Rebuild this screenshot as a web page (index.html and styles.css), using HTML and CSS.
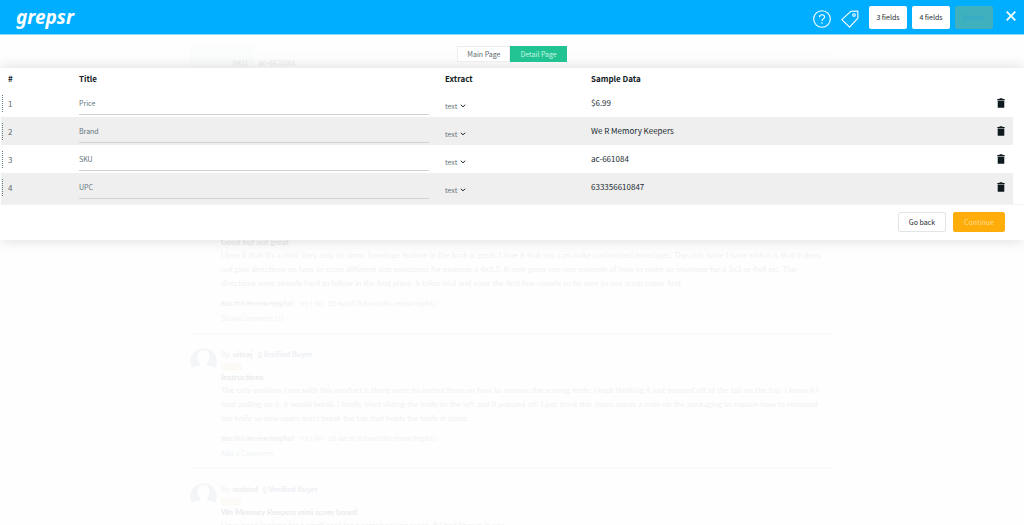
FILE: index.html
```html
<!DOCTYPE html>
<html lang="en">
<head>
<meta charset="utf-8">
<title>Grepsr</title>
<link rel="stylesheet" href="styles.css">
</head>
<body>
<svg class="sprite" aria-hidden="true">
  <symbol id="trash" viewBox="0 0 8 10"><path d="M0.300 1h2L2.800.2h2.400l.5.8h2v1.300H.3zM.7 2.700h6.600v6.200a.9.9 0 0 1-.9.9H1.600a.9.9 0 0 1-.9-.9z"/></symbol>
  <symbol id="chevron" viewBox="0 0 6 4"><path d="M.8.800l2.200 2 2.200-2" fill="none" stroke="currentColor" stroke-width="1"/></symbol>
  <symbol id="avatar" viewBox="0 0 27 22"><path d="M2 20A13.200 13.200 0 1 1 25 20Q24 18.500 18 17.500Q16.500 17 17 15Q20 12 19.500 7Q18.500 2 13.500 2Q8.500 2 7.500 7Q7 12 10 15Q10.500 17 9 17.500Q3 18.500 2 20z"/></symbol>
</svg>

<main class="site">
  <section class="specs">
    <div class="swatch"></div>
    <div class="spec-list">
      <div class="spec-line"></div>
      <p class="spec"><span>SKU</span><span>ac-661084</span></p>
    </div>
  </section>

  <article class="review">
    <svg class="avatar"><use href="#avatar"/></svg>
    <div class="review-body">
      <p class="by">By: <b>scrapper</b> <b class="verified">▯ Verified Buyer</b></p>
      <p class="stars">▯▯▯▯▯</p>
      <h3>Good but not great</h3>
      <p class="copy">I love it that it's a mini. Very easy to store. Envelope feature in the back is great. I love it that you can make customized envelopes. The only issue I have with it is that it does<br>not give directions on how to score different size envelopes for example a 4x5.5. It only gives you one example of how to make an envelope for a 3x3 or 4x4 etc. The<br>directions were already hard to follow in the first place. It takes trial and error the first few rounds so be sure to use scrap paper first.</p>
      <p class="helpful"><b>Was this Review Helpful?</b><a href="#">Yes</a> | <a href="#">No</a><span>(25 out of 25 found this review helpful.)</span></p>
      <p class="comment"><a href="#">Show Comment (1)</a></p>
    </div>
  </article>

  <article class="review">
    <svg class="avatar"><use href="#avatar"/></svg>
    <div class="review-body">
      <p class="by">By: <b>uiteaj</b> <b class="verified">▯ Verified Buyer</b></p>
      <p class="stars">▯▯▯▯▯</p>
      <h3>Instructions</h3>
      <p class="copy">The only problem I see with this product is there were no instructions on how to remove the scoring knife. I kept thinking it just popped off of the tab on the top. I knew if I<br>kept pulling on it, it would break. I finally tried sliding the knife to the left and it popped off. I just think this items needs a note on the packaging to explain how to removed<br>the knife so new users don't break the tab that holds the knife in place.</p>
      <p class="helpful"><b>Was this Review Helpful?</b><a href="#">Yes</a> | <a href="#">No</a><span>(16 out of 16 found this review helpful.)</span></p>
      <p class="comment"><a href="#">Add a Comment</a></p>
    </div>
  </article>

  <article class="review">
    <svg class="avatar"><use href="#avatar"/></svg>
    <div class="review-body">
      <p class="by">By: <b>mobird</b> <b class="verified">▯ Verified Buyer</b></p>
      <p class="stars">▯▯▯▯▯</p>
      <h3>We Memory Keepers mini score board</h3>
      <p class="copy">Have been looking for a small card for a scrapbooking score. If I had known it was</p>
    </div>
  </article>
</main>

<div class="overlay">
  <header class="topbar">
    <a class="logo" href="#">grepsr</a>
    <div class="tools">
      <button class="icon-btn" aria-label="Help">
        <svg width="18" height="18" viewBox="0 0 18 18" fill="none" stroke="#fff" stroke-width="1.100"><circle cx="9" cy="9" r="8.300"/><path d="M6.500 7.200C6.500 3.900 11.500 4 11.500 7c0 1.900-2.500 1.900-2.500 4M9 12.300v1.400"/></svg>
      </button>
      <button class="icon-btn" aria-label="Tags">
        <svg width="18" height="18" viewBox="0 0 18 18" fill="none" stroke="#fff" stroke-width="1.100" stroke-linejoin="round"><path d="M9.800 1.300L16.800 1.100 16.900 8.200 8.600 17.200.8 9.700z"/><circle cx="13" cy="5" r="1.300"/></svg>
      </button>
      <button class="btn">3 fields</button>
      <button class="btn">4 fields</button>
      <button class="btn export" disabled>Export</button>
      <button class="icon-btn close" aria-label="Close">
        <svg width="10" height="10" viewBox="0 0 10 10" fill="none" stroke="#fff" stroke-width="1.700"><path d="M.7.7l8.600 8.600M9.300.7L.7 9.300"/></svg>
      </button>
    </div>
  </header>

  <nav class="tabs">
    <button class="tab">Main Page</button>
    <button class="tab active">Detail Page</button>
  </nav>

  <section class="panel">
    <table class="fields">
      <colgroup><col class="c-num"><col class="c-title"><col class="c-extract"><col><col class="c-del"></colgroup>
      <thead>
        <tr><th>#</th><th>Title</th><th>Extract</th><th>Sample Data</th><th></th></tr>
      </thead>
      <tbody>
        <tr>
          <td class="num"><span>1</span></td>
          <td><input class="name" aria-label="Title 1" value="Price"></td>
          <td><label class="pick"><select aria-label="Extract 1"><option>text</option></select><svg><use href="#chevron"/></svg></label></td>
          <td>$6.99</td>
          <td><button class="del" aria-label="Delete 1"><svg><use href="#trash"/></svg></button></td>
        </tr>
        <tr>
          <td class="num"><span>2</span></td>
          <td><input class="name" aria-label="Title 2" value="Brand"></td>
          <td><label class="pick"><select aria-label="Extract 2"><option>text</option></select><svg><use href="#chevron"/></svg></label></td>
          <td>We R Memory Keepers</td>
          <td><button class="del" aria-label="Delete 2"><svg><use href="#trash"/></svg></button></td>
        </tr>
        <tr>
          <td class="num"><span>3</span></td>
          <td><input class="name" aria-label="Title 3" value="SKU"></td>
          <td><label class="pick"><select aria-label="Extract 3"><option>text</option></select><svg><use href="#chevron"/></svg></label></td>
          <td>ac-661084</td>
          <td><button class="del" aria-label="Delete 3"><svg><use href="#trash"/></svg></button></td>
        </tr>
        <tr>
          <td class="num"><span>4</span></td>
          <td><input class="name" aria-label="Title 4" value="UPC"></td>
          <td><label class="pick"><select aria-label="Extract 4"><option>text</option></select><svg><use href="#chevron"/></svg></label></td>
          <td>633356610847</td>
          <td><button class="del" aria-label="Delete 4"><svg><use href="#trash"/></svg></button></td>
        </tr>
      </tbody>
    </table>
    <footer class="actions">
      <button class="action">Go back</button>
      <button class="action primary">Continue</button>
    </footer>
  </section>
</div>
</body>
</html>
```

FILE: styles.css
```css
* { box-sizing: border-box; }

body {
  margin: 0;
  background: #fefefe;
  color: #1c2b30;
  font-family: "Noto Sans CJK SC", "Open Sans", sans-serif;
  font-size: 8px;
  line-height: 14px;
}

button, input, select { font: inherit; color: inherit; margin: 0; }
button { padding: 0; border: 0; background: none; }
p, h3 { margin: 0; }
a { text-decoration: none; }
.sprite { display: none; }

/* Faded site behind the overlay */
.site {
  height: 100vh;
  overflow: hidden;
  padding: 44px 190px 0;
  color: #f1f1f1;
}
.specs { display: flex; height: 154px; }
.swatch { width: 64px; background: #fafdfc; }
.spec-list { flex: 1; padding-top: 8px; }
.spec-line { border-top: 1px solid #fafafa; }
.spec { display: flex; gap: 10px; margin-left: -22px; padding-top: 3px; color: #ececec; }

.review {
  display: flex;
  gap: 4px;
  padding: 14px 0 9px;
  border-top: 1px solid #f9f9f9;
}
.avatar { flex: none; width: 27px; height: 22px; fill: #f3f5f7; }
.review-body { flex: 1; }
.by { font-size: 7px; line-height: 12px; }
.by b { color: #eee; }
.by .verified { margin-left: 4px; color: #edf0f4; }
.stars { font-size: 8px; line-height: 11px; color: #fbf4e6; }
.review h3 { font: bold 8px/12px Lato, sans-serif; color: #ebebeb; }
.copy { font-family: Lato, sans-serif; white-space: nowrap; }
.helpful { margin-top: 8px; font-size: 6px; line-height: 12px; }
.helpful b { margin-right: 4px; }
.helpful a { margin: 0 1px; color: #f1f4f6; }
.helpful span { margin-left: 4px; }
.comment { margin-top: 2px; font-size: 7px; line-height: 12px; }
.comment a { color: #eff4f8; }

/* Overlay */
.overlay { position: absolute; top: 0; left: 0; right: 0; }

.topbar {
  display: flex;
  align-items: center;
  justify-content: space-between;
  height: 35px;
  padding: 0 8px 0 16px;
  background: #00aeff;
  border-bottom: 1px solid #8edaff;
}
.logo {
  color: #fff;
  font: italic bold 19px/32px "Noto Sans", sans-serif;
}
.tools { display: flex; align-items: center; gap: 5px; }
.icon-btn { display: flex; margin: 4px 5px 0 0; }
.btn {
  min-width: 38px;
  height: 23px;
  padding: 0 7px;
  border-radius: 2px;
  background: #fff;
  font-size: 7px;
}
.export { background: #3fb0bd; color: #2fa9cc; }
.close { margin: 0 0 2px 8px; }

.tabs { display: flex; justify-content: center; padding: 11px 0 6px; }
.tab {
  height: 16px;
  padding: 0 9px;
  border: 1px solid #ededed;
  background: #fff;
  color: #5c6a70;
  font-size: 7px;
  line-height: 14px;
}
.tab.active { border-color: #20c391; background: #20c391; color: #c9f5e5; }

.panel {
  background: #fff;
  box-shadow: 0 0 14px rgba(0, 0, 0, 0.14);
}
.fields {
  width: calc(100% - 12px);
  margin-left: 1px;
  border-collapse: collapse;
  table-layout: fixed;
}
.c-num { width: 70px; }
.c-title { width: 366px; }
.c-extract { width: 146px; }
.c-del { width: 23px; }

th, td { padding: 0 8px; text-align: left; vertical-align: middle; white-space: nowrap; }
th { height: 21px; color: #101a1d; font-weight: bold; }
th:first-child { padding-left: 7px; }
td { height: 28px; }
th:last-child, td:last-child { padding: 0 7px; }
tbody tr:nth-child(even) { background: #efefef; }
tbody tr:last-child td { height: 31px; padding-bottom: 3px; }

.num, td.num:first-child { padding-left: 1px; color: #5c6a70; }
.num span { display: block; padding-left: 5px; border-left: 1px dotted #5b7c84; line-height: 17px; }
.name {
  display: block;
  width: 100%;
  height: 22px;
  margin-top: 2px;
  padding: 0 0 1px;
  border: 0;
  border-bottom: 1px solid #cfd2d3;
  background: none;
  color: #66757b;
  font-size: 7px;
}
.pick { display: flex; align-items: center; gap: 1px; padding-top: 5px; color: #66757b; font-size: 7px; }
.pick select { width: 14px; padding: 0; border: 0; background: none; appearance: none; }
.pick svg { width: 6px; height: 4px; color: #1c2b30; }
.del { display: flex; }
.del svg { width: 8px; height: 10px; fill: #0e1a1e; }

.actions {
  display: flex;
  justify-content: flex-end;
  align-items: center;
  gap: 7px;
  height: 36px;
  padding: 0 19px 2px 0;
  border-top: 1px solid #f4f4f4;
}
.action {
  height: 20px;
  padding: 0 10px;
  border: 1px solid #e2e4e5;
  border-radius: 2px;
  background: #fff;
  font-size: 7px;
  line-height: 18px;
}
.action.primary { border-color: #ffad0a; background: #ffad0a; color: #ffdb90; }
```
